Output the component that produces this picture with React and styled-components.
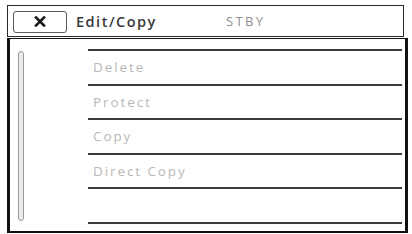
import React from 'react'
import styled, { createGlobalStyle } from 'styled-components'

const Global = createGlobalStyle`
  html, body {
    margin: 0;
    background: #fff;
  }
  body {
    font-family: 'Open Sans', 'DejaVu Sans', sans-serif;
  }
`

const items = ['Delete', 'Protect', 'Copy', 'Direct Copy', '']

const App = () => {
  return (
    <>
      <Global />
      <Screen>
        <Header>
          <CloseButton aria-label='close'>
            <svg width='12' height='11' viewBox='0 0 12 11'>
              <path d='M2 1.5 L10 9.5 M10 1.5 L2 9.5' stroke='#1a1a1a' strokeWidth='2.6' strokeLinecap='square' />
            </svg>
          </CloseButton>
          <Title>Edit/Copy</Title>
          <Status>STBY</Status>
        </Header>
        <Panel>
          <ScrollTrack />
          <Menu>
            {items.map((label, i) => (
              <MenuRow key={i}>{label}</MenuRow>
            ))}
          </Menu>
        </Panel>
      </Screen>
    </>
  )
}

const Screen = styled.div`
  width: 412px;
  height: 234px;
  box-sizing: border-box;
  padding: 5px 4px 1px 7px;
  display: flex;
  flex-direction: column;
`
const Header = styled.div`
  width: 397px;
  height: 32px;
  box-sizing: border-box;
  border: 1.5px solid #2b2b2b;
  display: flex;
  align-items: center;
  padding-left: 5px;
`
const CloseButton = styled.button`
  width: 54px;
  height: 22px;
  box-sizing: border-box;
  border: 1.5px solid #5a5a5a;
  border-radius: 3px;
  background: #fff;
  display: flex;
  align-items: center;
  justify-content: center;
  padding: 0;
  margin-top: 1px;
`
const Title = styled.span`
  margin-left: 9px;
  font-size: 14.5px;
  font-weight: 600;
  letter-spacing: 1.5px;
  color: #3a3a3a;
`
const Status = styled.span`
  margin-left: 69px;
  font-size: 13px;
  letter-spacing: 2.4px;
  color: #8f8f8f;
`
const Panel = styled.div`
  margin-top: 1px;
  width: 401px;
  flex: 1;
  box-sizing: border-box;
  border-style: solid;
  border-color: #111;
  border-width: 1.5px 3px 2px 3px;
  display: flex;
  padding: 10px 3px 0 8px;
`
const ScrollTrack = styled.div`
  width: 4px;
  height: 168px;
  margin-top: 2px;
  border: 1px solid #9a9a9a;
  border-radius: 3px;
  background: #ececec;
`
const Menu = styled.div`
  flex: 1;
  margin-left: 64px;
  border-top: 2px solid #3a3a3a;
`
const MenuRow = styled.div`
  height: 32.6px;
  border-bottom: 2px solid #3a3a3a;
  display: flex;
  align-items: center;
  padding-left: 5px;
  font-size: 13.5px;
  letter-spacing: 1.9px;
  color: #b8b8b8;
`

export default App
